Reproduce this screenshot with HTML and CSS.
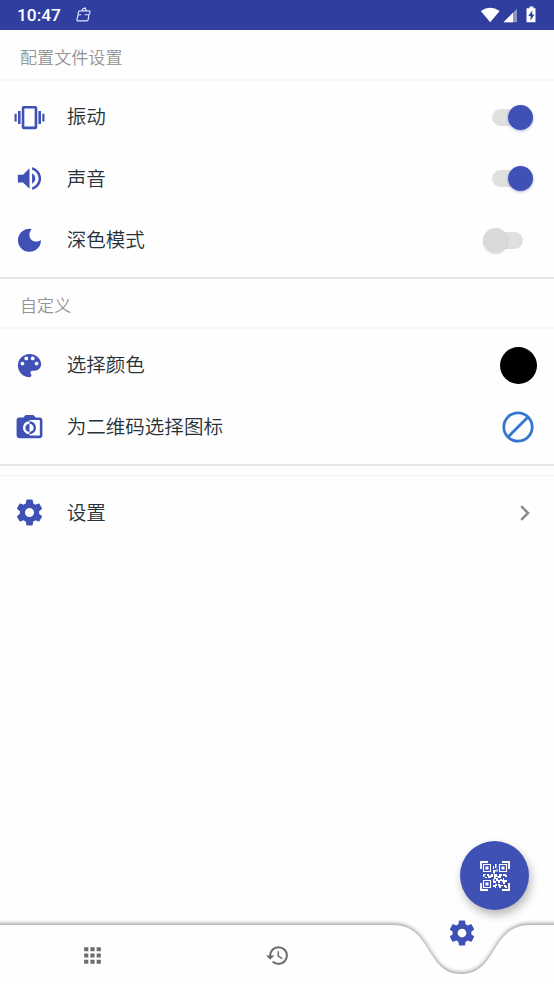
FILE: index.html
```html
<!DOCTYPE html>
<html lang="zh-CN">
<head>
<meta charset="utf-8">
<title>设置</title>
<link rel="stylesheet" href="styles.css">
</head>
<body>
<svg class="defs" aria-hidden="true">
  <symbol id="gear" viewBox="0 0 24 24"><path d="M19.43 12.98c.04-.32.07-.64.07-.98s-.03-.66-.07-.98l2.11-1.65c.19-.15.24-.42.12-.64l-2-3.46c-.12-.22-.39-.3-.61-.22l-2.49 1c-.52-.4-1.080-.73-1.690-.98l-.38-2.650C14.460 2.180 14.250 2 14 2h-4c-.25 0-.46.18-.49.42l-.38 2.650c-.61.25-1.170.59-1.690.98l-2.490-1c-.23-.09-.49 0-.61.22l-2 3.460c-.13.22-.07.49.12.64l2.110 1.650c-.04.32-.07.65-.07.98s.03.66.07.98l-2.110 1.650c-.19.15-.24.42-.12.64l2 3.460c.12.22.39.3.61.22l2.490-1c.52.4 1.080.73 1.690.98l.38 2.650c.03.24.24.42.49.42h4c.25 0 .46-.18.49-.42l.38-2.650c.61-.25 1.170-.59 1.690-.98l2.490 1c.23.09.49 0 .61-.22l2-3.460c.12-.22.07-.49-.12-.64l-2.110-1.650zM12 15.500c-1.930 0-3.500-1.570-3.500-3.500s1.570-3.500 3.500-3.500 3.500 1.570 3.500 3.500-1.570 3.500-3.500 3.500z"/></symbol>
</svg>
<div class="screen">
  <header class="status">
    <span class="clock">10:47</span>
    <svg class="bag" viewBox="0 0 14 14"><path d="M3.400 3.600H12q1.200 0 1 1.200L12.700 6Q12.400 7.200 11.400 7.200L12 8 11.400 11.600Q11.200 13 10 13H1.800Q.7 13 .9 11.900L1.700 8 2.600 7.200Q1.800 6.700 2 5.800L2.300 4.600Q2.500 3.600 3.400 3.600ZM2.600 7.200H5M8 7.200H11.400M6 3.600 6.400 1.600 8.800 1 9.400 3.600"/></svg>
    <svg class="signals" viewBox="0 0 58 18">
      <path d="M.8 4.900Q10.200 -1.200 19.700 4.900L10.200 16.300Z"/>
      <path d="M23.500 16.200 37 2.700V16.200Z" opacity=".45"/><path d="M23.500 16.200 33 6.700V16.200Z"/>
      <path fill-rule="evenodd" d="M49.500 .5h4v1.800h2v14h-9v-14h3ZM52.300 4.500l-4 5.500h2.300V14.500l3.800-6h-2.200Z"/>
    </svg>
  </header>
  <h2 class="heading">配置文件设置</h2>
  <section class="group">
    <div class="row">
      <svg class="icon" viewBox="0 0 24 24"><path d="M.4 15h1.700V9H.4v6zm2.700 2h2V7h-2v10zm18.800-8v6h1.700V9h-1.700zm-3 8h2V7h-2v10zM16.500 3h-9C6.670 3 6 3.670 6 4.500v15c0 .83.67 1.500 1.500 1.500h9c.83 0 1.500-.67 1.500-1.500v-15c0-.83-.67-1.500-1.500-1.500zM16 19H8V5h8v14z"/></svg>
      <span class="label">振动</span><span class="switch on"></span>
    </div>
    <div class="row">
      <svg class="icon" viewBox="0 0 24 24"><path d="M3 9v6h4l5 5V4L7 9H3zm13.500 3c0-1.770-1.020-3.290-2.500-4.030v8.050c1.480-.73 2.500-2.250 2.500-4.020zM14 3.230v2.060c2.890.86 5 3.540 5 6.710s-2.110 5.850-5 6.710v2.060c4.010-.91 7-4.490 7-8.770s-2.990-7.860-7-8.770z"/></svg>
      <span class="label">声音</span><span class="switch on"></span>
    </div>
    <div class="row">
      <svg class="icon" viewBox="0 0 24 24"><path d="M13.700 3.100C11.300 6.200 11.400 9.700 13.700 11.600 16 13.400 18.800 13.100 20.900 11.700A8.900 8.900 0 1 1 13.700 3.100Z"/></svg>
      <span class="label">深色模式</span><span class="switch"></span>
    </div>
  </section>
  <h2 class="heading second">自定义</h2>
  <section class="group short">
    <div class="row">
      <svg class="icon" viewBox="0 0 24 24"><path d="M12 3c-4.970 0-9 4.030-9 9s4.030 9 9 9c.83 0 1.500-.67 1.500-1.500 0-.39-.15-.74-.39-1.010-.23-.26-.38-.61-.38-.99 0-.83.67-1.500 1.500-1.500H16c2.760 0 5-2.240 5-5 0-4.420-4.030-8-9-8zm-5.500 9c-.83 0-1.500-.67-1.500-1.500S5.670 9 6.500 9 8 9.670 8 10.500 7.330 12 6.500 12zm3-4C8.670 8 8 7.330 8 6.500S8.670 5 9.500 5s1.500.67 1.500 1.500S10.330 8 9.500 8zm5 0c-.83 0-1.500-.67-1.500-1.500S13.670 5 14.500 5s1.500.67 1.500 1.500S15.330 8 14.500 8zm3 4c-.83 0-1.500-.67-1.500-1.500S16.670 9 17.500 9s1.500.67 1.500 1.500-.67 1.500-1.500 1.500z"/></svg>
      <span class="label">选择颜色</span><span class="swatch"></span>
    </div>
    <div class="row">
      <svg class="icon" viewBox="0 0 24 24"><path d="M20 5h-3.200L15 3H9L7.200 5H4c-1.100 0-2 .9-2 2v12c0 1.100.9 2 2 2h16c1.100 0 2-.9 2-2V7c0-1.100-.9-2-2-2zm0 14h-8v-1c-2.800 0-5-2.200-5-5s2.200-5 5-5V7h8v12zm-3-6c0-2.800-2.200-5-5-5v1.800c1.800 0 3.200 1.400 3.200 3.200s-1.400 3.200-3.200 3.200V18c2.800 0 5-2.200 5-5zm-8.200 0c0 1.800 1.400 3.200 3.200 3.200V9.800c-1.800 0-3.200 1.400-3.200 3.200z"/></svg>
      <span class="label">为二维码选择图标</span>
      <svg class="none" viewBox="0 0 32 32"><circle cx="16" cy="16" r="14.200"/><path d="M6 26 26 6"/></svg>
    </div>
  </section>
  <section class="last">
    <div class="row">
      <svg class="icon"><use href="#gear"/></svg>
      <span class="label">设置</span>
      <svg class="chevron" viewBox="0 0 10 16"><path d="M1.200 1.200 8 8 1.200 14.800"/></svg>
    </div>
  </section>
  <button class="fab" aria-label="QR">
    <svg viewBox="0 0 30 30">
      <path class="frame" d="M1 8V1H8M22 1h7V8M29 22v7H22M8 29H1V22"/>
      <path class="finder" d="M3.500 3.500h7v7h-7ZM19.500 3.500h7v7h-7ZM3.500 19.500h7v7h-7Z"/>
      <path class="dots" d="M5.500 5.500h3v3h-3ZM21.500 5.500h3v3h-3ZM5.500 21.500h3v3h-3ZM13 5h1v3h-1ZM15 3h1.500v4H15ZM13 9h3v1.500h-1v2h-2ZM16.500 8h1v3h-1ZM3 13h3v1H4.500v2H3ZM7 13h2v1.500h2V13h2v3h-2v1H8v-2H7ZM5 16h2v1H5ZM14 13h3v2h2v-2h3v2h-1v2h-3v-1h-2v2h-2ZM23 13h3v1h1v2h-2v-1h-2ZM13 18h1.500v2H16v2h-3ZM16 17h2v2h2v-1h2v2h-2v2h-2v-2h-2ZM23 17h1v2h3v2h-2v2h-2v-2h-1v-2h1ZM13 24h2v-1h2v2h-1v2h-1v-1h-2ZM18 23h2v1h3v1h-2v2h-2v-2h-1ZM24 24h2v1h1v2h-2v-1h-1Z"/>
    </svg>
  </button>
  <nav class="nav">
    <svg class="nav-shape" viewBox="0 0 554 60"><path d="M-10 1H393C433 1 425 50 461.500 50S490 1 530 1H564V80H-10Z"/></svg>
    <svg class="tab" viewBox="0 0 24 24"><path d="M4 8h4V4H4v4zm6 12h4v-4h-4v4zm-6 0h4v-4H4v4zm0-6h4v-4H4v4zm6 0h4v-4h-4v4zm6-10v4h4V4h-4zm-6 4h4V4h-4v4zm6 6h4v-4h-4v4zm0 6h4v-4h-4v4z"/></svg>
    <svg class="tab history" viewBox="0 0 24 24"><path d="M13 3a9 9 0 0 0-9 9H1l3.890 3.890.07.14L9 12H6c0-3.870 3.130-7 7-7s7 3.130 7 7-3.130 7-7 7c-1.930 0-3.680-.79-4.940-2.060l-1.420 1.420A8.954 8.954 0 0 0 13 21a9 9 0 0 0 0-18zm-1 5v5l4.280 2.540.72-1.210-3.500-2.080V8H12z"/></svg>
    <svg class="tab active"><use href="#gear"/></svg>
  </nav>
</div>
</body>
</html>
```
FILE: styles.css
```css
* { box-sizing: border-box; }
body { margin: 0; background: #fefefe; font-family: Roboto, "Noto Sans CJK SC", sans-serif; }
.defs { position: absolute; width: 0; height: 0; }
.screen { position: relative; display: flex; flex-direction: column; width: 554px; height: 984px; overflow: hidden; background: #fefefe; }
.status { display: flex; align-items: center; height: 29.5px; padding: 0 16px 0 17px; background: #303f9f; color: #fff; flex: none; }
.clock { font-size: 17.3px; font-weight: 500; line-height: 20px; padding-top: 1px; width: 59px; }
.bag { width: 15px; height: 15px; fill: none; stroke: #dfe2ff; stroke-width: 1.1; }
.signals { width: 58px; height: 18px; margin-left: auto; fill: #fff; }
.heading { height: 51.5px; flex: none; margin: 0; padding: 3px 20px 0; border-bottom: 2px solid #f6f6f6; font-size: 17.1px; font-weight: 350; line-height: 51px; color: #949494; }
.second { height: 50px; line-height: 48px; }
.group { height: 198px; flex: none; padding-top: 5.5px; border-bottom: 2px solid #e5e5e5; }
.group.short { height: 137px; }
.last { margin-top: 9px; padding-top: 6px; border-top: 1px solid #f4f4f4; }
.row { display: flex; align-items: center; height: 61.5px; padding: 0 17px 0 14px; }
.icon { width: 31px; height: 31px; flex: none; fill: #3f51b5; }
.label { margin-left: 21.7px; padding-top: 1.6px; font-size: 19.55px; font-weight: 350; line-height: 30px; color: #263238; }
.switch { position: relative; width: 31px; height: 17px; margin: 0 14px 0 auto; border-radius: 9px; background: #e0e0e0; }
.switch::after { content: ""; position: absolute; left: -9px; top: -4px; width: 25px; height: 25px; border-radius: 50%; background: #dadada; box-shadow: 0 1px 2px #0002; }
.switch.on::after { left: 15.5px; background: #3f51b5; box-shadow: 0 1px 3px #3f51b570; }
.swatch { width: 37px; height: 37px; margin-left: auto; border-radius: 50%; background: #000; }
.none { width: 32px; height: 32px; margin: 0 3px 0 auto; fill: none; stroke: #3577cf; stroke-width: 2.8; }
.chevron { width: 10px; height: 16px; margin: 0 7px 0 auto; fill: none; stroke: #8c8c8c; stroke-width: 2.5; }
.fab { position: absolute; left: 460px; top: 841px; width: 69px; height: 69px; padding: 0; border: 0; border-radius: 50%; background: #3f51b5; box-shadow: 2px 5px 10px #00000047; display: grid; place-items: center; z-index: 2; }
.fab svg { width: 30px; height: 30px; fill: #fff; }
.frame, .finder { fill: none; stroke: #fff; }
.frame { stroke-width: 1.8; }
.finder { stroke-width: 1.1; }
.nav { position: relative; display: grid; grid-template-columns: repeat(3, 1fr); justify-items: center; height: 60px; flex: none; margin-top: auto; padding-top: 19px; }
.nav-shape { position: absolute; left: 0; top: 0; width: 554px; height: 60px; overflow: visible; fill: #fefefe; filter: drop-shadow(0 -1px 2.2px #0007); }
.tab { position: relative; width: 25px; height: 25px; fill: #6c6c6c; }
.tab.history { margin-left: 1px; }
.tab.active { width: 30px; height: 30px; margin-top: -25px; fill: #3f51b5; }
```
